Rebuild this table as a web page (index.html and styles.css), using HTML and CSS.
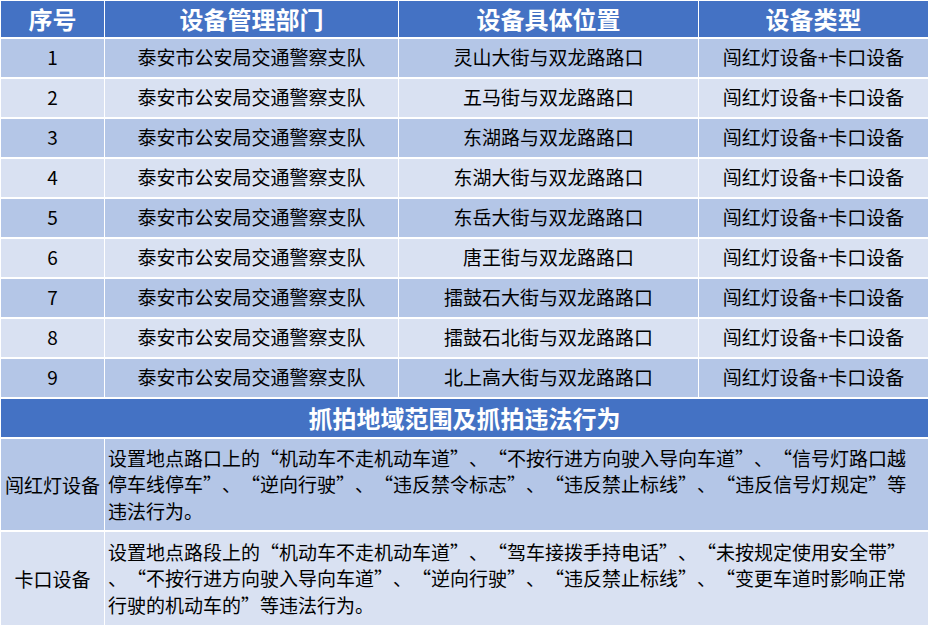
FILE: index.html
```html
<!DOCTYPE html>
<html lang="zh-CN">
<head>
<meta charset="utf-8">
<title>设备列表</title>
<link rel="stylesheet" href="styles.css">
</head>
<body>
<div class="table">
  <div class="cell head">序号</div>
  <div class="cell head">设备管理部门</div>
  <div class="cell head">设备具体位置</div>
  <div class="cell head">设备类型</div>

  <div class="cell dark">1</div><div class="cell dark">泰安市公安局交通警察支队</div><div class="cell dark">灵山大街与双龙路路口</div><div class="cell dark">闯红灯设备+卡口设备</div>
  <div class="cell light">2</div><div class="cell light">泰安市公安局交通警察支队</div><div class="cell light">五马街与双龙路路口</div><div class="cell light">闯红灯设备+卡口设备</div>
  <div class="cell dark">3</div><div class="cell dark">泰安市公安局交通警察支队</div><div class="cell dark">东湖路与双龙路路口</div><div class="cell dark">闯红灯设备+卡口设备</div>
  <div class="cell light">4</div><div class="cell light">泰安市公安局交通警察支队</div><div class="cell light">东湖大街与双龙路路口</div><div class="cell light">闯红灯设备+卡口设备</div>
  <div class="cell dark">5</div><div class="cell dark">泰安市公安局交通警察支队</div><div class="cell dark">东岳大街与双龙路路口</div><div class="cell dark">闯红灯设备+卡口设备</div>
  <div class="cell light">6</div><div class="cell light">泰安市公安局交通警察支队</div><div class="cell light">唐王街与双龙路路口</div><div class="cell light">闯红灯设备+卡口设备</div>
  <div class="cell dark">7</div><div class="cell dark">泰安市公安局交通警察支队</div><div class="cell dark">擂鼓石大街与双龙路路口</div><div class="cell dark">闯红灯设备+卡口设备</div>
  <div class="cell light">8</div><div class="cell light">泰安市公安局交通警察支队</div><div class="cell light">擂鼓石北街与双龙路路口</div><div class="cell light">闯红灯设备+卡口设备</div>
  <div class="cell dark">9</div><div class="cell dark">泰安市公安局交通警察支队</div><div class="cell dark">北上高大街与双龙路路口</div><div class="cell dark">闯红灯设备+卡口设备</div>

  <div class="cell head section">抓拍地域范围及抓拍违法行为</div>

  <div class="cell dark desc">闯红灯设备</div>
  <div class="cell dark text desc">
    <span class="line">设置地点路口上的<span class="qo">“</span>机动车不走机动车道<span class="qc">”</span>、<span class="qo">“</span>不按行进方向驶入导向车道<span class="qc">”</span>、<span class="qo">“</span>信号灯路口越</span>
    <span class="line">停车线停车<span class="qc">”</span>、<span class="qo">“</span>逆向行驶<span class="qc">”</span>、<span class="qo">“</span>违反禁令标志<span class="qc">”</span>、<span class="qo">“</span>违反禁止标线<span class="qc">”</span>、<span class="qo">“</span>违反信号灯规定<span class="qc">”</span>等</span>
    <span class="line">违法行为。</span>
  </div>

  <div class="cell light desc">卡口设备</div>
  <div class="cell light text desc">
    <span class="line">设置地点路段上的<span class="qo">“</span>机动车不走机动车道<span class="qc">”</span>、<span class="qo">“</span>驾车接拨手持电话<span class="qc">”</span>、<span class="qo">“</span>未按规定使用安全带<span class="qc">”</span></span>
    <span class="line">、<span class="qo">“</span>不按行进方向驶入导向车道<span class="qc">”</span>、<span class="qo">“</span>逆向行驶<span class="qc">”</span>、<span class="qo">“</span>违反禁止标线<span class="qc">”</span>、<span class="qo">“</span>变更车道时影响正常</span>
    <span class="line">行驶的机动车的<span class="qc">”</span>等违法行为。</span>
  </div>
</div>
</body>
</html>
```

FILE: styles.css
```css
html, body {
  margin: 0;
  padding: 0;
  background: #ffffff;
}

body {
  width: 928px;
  height: 625px;
  overflow: hidden;
  font-family: "Noto Sans CJK SC", "Noto Sans", sans-serif;
  color: #000000;
}

.table {
  display: grid;
  grid-template-columns: 103px 293px 299px 229px;
  grid-template-rows: 36px repeat(9, 38px) 38px 91px 93px;
  column-gap: 1px;
  row-gap: 2px;
  padding: 1px 0 0 1px;
}

.cell {
  display: flex;
  align-items: center;
  justify-content: center;
  font-size: 19px;
  line-height: 1;
  white-space: nowrap;
  padding-bottom: 3px;
}

.head {
  background: #4472c4;
  color: #ffffff;
  font-weight: 700;
  font-size: 24px;
  padding-bottom: 1px;
}

.section {
  grid-column: 1 / 5;
}

.dark {
  background: #b4c6e7;
}

.light {
  background: #d9e1f2;
}

.desc {
  padding-bottom: 0;
}

.text {
  grid-column: 2 / 5;
  flex-direction: column;
  align-items: flex-start;
  justify-content: center;
  padding-left: 3px;
  line-height: 26.5px;
}

.line {
  display: block;
}

.qo,
.qc {
  display: inline-block;
  width: 1em;
}

.qo {
  text-align: right;
}

.qc {
  text-align: left;
}
```
